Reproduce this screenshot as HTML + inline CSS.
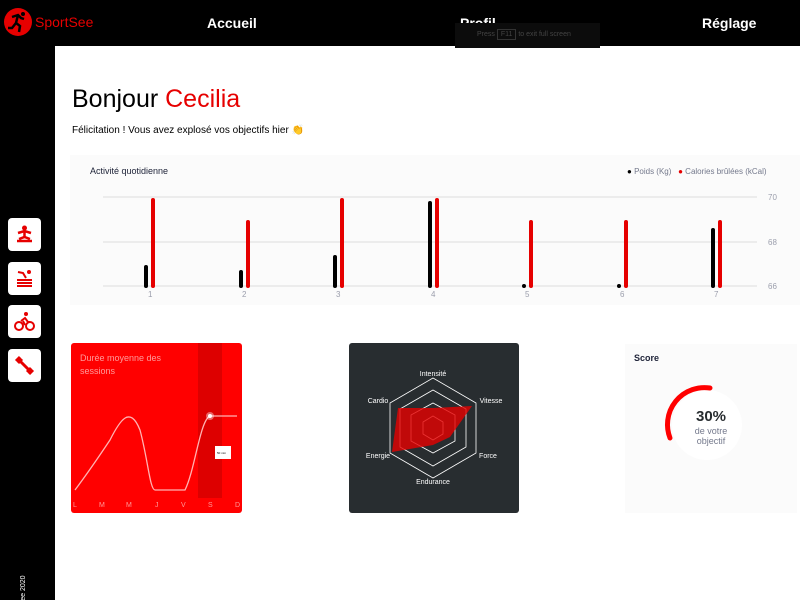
<!DOCTYPE html>
<html><head><meta charset="utf-8"><style>
*{margin:0;padding:0;box-sizing:border-box}
body{width:800px;height:600px;overflow:hidden;background:#fff;font-family:"Liberation Sans",sans-serif;position:relative}
.hdr{position:absolute;left:0;top:0;width:800px;height:46px;background:#000;color:#fff}
.nav{position:absolute;top:15px;font-size:14px;font-weight:bold}
.side{position:absolute;left:0;top:46px;width:55px;height:554px;background:#000;overflow:hidden}
.ic{position:absolute;left:8px;width:33px;height:33px;background:#fff;border-radius:4px}
.abs{position:absolute}
</style></head><body>
<div class="hdr">
<svg class="abs" style="left:4px;top:8px" width="28" height="28" viewBox="0 0 28 28"><circle cx="14" cy="14" r="14" fill="#e60000"/><path d="M8 9l6-2 3 3 3 1M14 7l-2 8 4 3-1 6M12 15l-4 5-4 0" stroke="#000" stroke-width="2.5" fill="none"/><circle cx="19" cy="6" r="2" fill="#000"/></svg>
<div class="abs" style="left:35px;top:14px;color:#e60000;font-size:14px">SportSee</div>
<div class="nav" style="left:207px">Accueil</div>
<div class="nav" style="left:460px">Profil</div>
<div class="nav" style="left:702px">Réglage</div>
<div class="abs" style="left:455px;top:23px;width:145px;height:25px;background:#0c0c0c;color:#444;font-size:7px;padding:8px 0 0 22px">Press <span style="border:1px solid #333;padding:1px 3px">F11</span> to exit full screen</div>
</div>
<div class="side">
<div class="ic" style="top:172px"><svg width="33" height="33"><circle cx="16.5" cy="10" r="2.5" fill="#e60000"/><path d="M10 15l6.5-2 6.5 2M16.5 13v6M9 23h15M11 21l5.5-2 5.5 2" stroke="#e60000" stroke-width="2.5" fill="none"/></svg></div>
<div class="ic" style="top:216px"><svg width="33" height="33"><circle cx="21" cy="10" r="2" fill="#e60000"/><path d="M10 10l5 1 3 5M9 18h15M9 21h15M9 24h15" stroke="#e60000" stroke-width="2" fill="none"/></svg></div>
<div class="ic" style="top:259px"><svg width="33" height="33"><circle cx="18" cy="9" r="2" fill="#e60000"/><circle cx="11" cy="21" r="4" stroke="#e60000" stroke-width="2" fill="none"/><circle cx="22" cy="21" r="4" stroke="#e60000" stroke-width="2" fill="none"/><path d="M13 16l4-3 3 4 2 0M15 16l2 4" stroke="#e60000" stroke-width="2" fill="none"/></svg></div>
<div class="ic" style="top:303px"><svg width="33" height="33"><path d="M11 11l11 11M8 12l4-4M10 14l4-4M19 23l4-4M21 25l4-4" stroke="#e60000" stroke-width="3" fill="none"/></svg></div>
<div class="abs" style="color:#fff;font-size:7px;transform:rotate(-90deg);transform-origin:left top;white-space:nowrap;top:610px;left:20px">Copiryght, SportSee 2020</div>
</div>
<div class="abs" style="left:72px;top:85px;font-size:25px">Bonjour <span style="color:#e60000">Cecilia</span></div>
<div class="abs" style="left:72px;top:125px;font-size:10px">Félicitation ! Vous avez explosé vos objectifs hier 👏</div>
<div class="abs" style="left:70px;top:155px;width:730px;height:150px;background:#fbfbfb"></div>
<div class="abs" style="left:90px;top:166px;font-size:9px;color:#20253a">Activité quotidienne</div>
<div class="abs" style="left:627px;top:167px;font-size:8px;color:#74798c"><span style="color:#000">●</span> Poids (Kg) &nbsp; <span style="color:#e60000">●</span> Calories brûlées (kCal)</div>
<svg class="abs" style="left:0;top:0" width="800" height="600">
<g stroke="#dedede"><line x1="103" y1="197" x2="757" y2="197"/><line x1="103" y1="242" x2="757" y2="242"/><line x1="103" y1="286" x2="757" y2="286"/></g>
<g font-size="8" fill="#9b9eac"><text x="768" y="200">70</text><text x="768" y="245">68</text><text x="768" y="289">66</text>
<text x="148" y="297">1</text><text x="242" y="297">2</text><text x="336" y="297">3</text><text x="431" y="297">4</text><text x="525" y="297">5</text><text x="620" y="297">6</text><text x="714" y="297">7</text></g>
<g stroke-width="4" stroke-linecap="round">
<g stroke="#000"><line x1="146" y1="267" x2="146" y2="286"/><line x1="241" y1="272" x2="241" y2="286"/><line x1="335" y1="257" x2="335" y2="286"/><line x1="430" y1="203" x2="430" y2="286"/><line x1="524" y1="286" x2="524" y2="286"/><line x1="619" y1="286" x2="619" y2="286"/><line x1="713" y1="230" x2="713" y2="286"/></g>
<g stroke="#e60000"><line x1="153" y1="200" x2="153" y2="286"/><line x1="248" y1="222" x2="248" y2="286"/><line x1="342" y1="200" x2="342" y2="286"/><line x1="437" y1="200" x2="437" y2="286"/><line x1="531" y1="222" x2="531" y2="286"/><line x1="626" y1="222" x2="626" y2="286"/><line x1="720" y1="222" x2="720" y2="286"/></g></g>
<rect x="71" y="343" width="171" height="170" rx="3" fill="#ff0000"/>
<rect x="198" y="343" width="24" height="155" fill="#d40000" opacity=".8"/>
<path d="M75 490C90 470 100 455 110 440 120 420 130 405 140 430 148 460 150 490 155 490L185 490C195 470 200 420 210 416L237 416" stroke="#ffb3b3" stroke-width="1.3" fill="none"/>
<circle cx="210" cy="416" r="4" fill="#fff" opacity=".4"/><circle cx="210" cy="416" r="2" fill="#fff"/>
<rect x="215" y="446" width="16" height="13" fill="#fff"/><text x="217" y="454" font-size="3">50 min</text>
<g font-size="7" fill="#ff9999"><text x="73" y="507">L</text><text x="99" y="507">M</text><text x="126" y="507">M</text><text x="155" y="507">J</text><text x="181" y="507">V</text><text x="208" y="507">S</text><text x="235" y="507">D</text></g>
<text x="80" y="361" font-size="9" fill="#ff9a9a">Durée moyenne des</text><text x="80" y="374" font-size="9" fill="#ff9a9a">sessions</text>
<rect x="349" y="343" width="170" height="170" rx="3" fill="#282d30"/>
<g stroke="#fff" fill="none" stroke-width=".8"><polygon points="433,378 476,403 476,453 433,478 390,453 390,403"/><polygon points="433,390 466,409 466,447 433,466 400,447 400,409"/><polygon points="433,403 455,415 455,441 433,453 411,441 411,415"/><polygon points="433,416 443,422 443,434 433,440 423,434 423,422"/></g>
<polygon points="398,408 433,408 472,406 450,437 433,445 392,452" fill="#e60000" opacity=".8"/>
<g font-size="7" fill="#fff" text-anchor="middle"><text x="433" y="376">Intensité</text><text x="491" y="403">Vitesse</text><text x="488" y="458">Force</text><text x="433" y="484">Endurance</text><text x="378" y="458">Energie</text><text x="378" y="403">Cardio</text></g>
<rect x="625" y="344" width="172" height="169" fill="#fbfbfb"/>
<text x="634" y="361" font-size="9" font-weight="bold" fill="#20253a">Score</text>
<circle cx="707" cy="425" r="35" fill="#fff"/>
<path d="M710 388A37 37 0 0 0 670 438" stroke="#ff0000" stroke-width="5" stroke-linecap="round" fill="none"/>
<text x="711" y="421" font-size="15" font-weight="bold" fill="#282d30" text-anchor="middle">30%</text>
<text x="711" y="434" font-size="9" fill="#74798c" text-anchor="middle">de votre</text>
<text x="711" y="444" font-size="9" fill="#74798c" text-anchor="middle">objectif</text>
</svg>
</body></html>
